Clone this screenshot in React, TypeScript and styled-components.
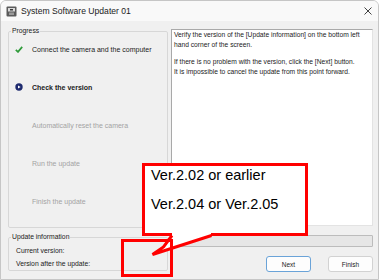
import React from "react";
import styled, { createGlobalStyle } from "styled-components";

const GlobalStyle = createGlobalStyle`
  html, body {
    margin: 0;
    padding: 0;
    background: #ffffff;
  }
  * {
    box-sizing: border-box;
  }
`;

const Window = styled.div`
  position: relative;
  width: 379px;
  height: 280px;
  border: 1px solid #c6c6c6;
  border-radius: 6px 6px 0 0;
  background: #f0f0f0;
  display: flex;
  flex-direction: column;
  overflow: hidden;
  font-family: "Liberation Sans", Arial, sans-serif;
  color: #000;
`;

const TitleBar = styled.div`
  height: 20px;
  flex: none;
  display: flex;
  align-items: center;
  padding: 0 6px 0 5px;
  background: #f9f9f9;
`;

const TitleText = styled.span`
  margin-left: 4px;
  font-size: 8.6px;
  color: #1b1b1b;
  flex: 1;
`;

const Body = styled.div`
  display: grid;
  grid-template-columns: 160px 202px;
  column-gap: 3px;
  padding: 6px 0 0 7px;
`;

const LeftColumn = styled.div`
  display: flex;
  flex-direction: column;
  gap: 5px;
`;

const GroupBox = styled.fieldset<{ $height: number }>`
  margin: 0;
  padding: 0;
  height: ${(p) => p.$height}px;
  border: 1px solid #d7d7d7;
  border-radius: 2px;
`;

const Legend = styled.legend`
  padding: 0 1px;
  margin-left: 2px;
  font-size: 6.8px;
  line-height: 8px;
  color: #1b1b1b;
`;

const StepList = styled.div`
  display: flex;
  flex-direction: column;
  gap: 26px;
  padding: 8px 0 0 6px;
`;

const StepRow = styled.div<{ $state: "done" | "current" | "todo" }>`
  display: flex;
  align-items: center;
  height: 12px;
  font-size: 7px;
  font-weight: ${(p) => (p.$state === "current" ? 700 : 400)};
  color: ${(p) => (p.$state === "todo" ? "#a3a3a3" : "#1b1b1b")};
`;

const StepIcon = styled.span`
  width: 8px;
  height: 8px;
  margin-right: 9px;
  display: flex;
  align-items: center;
  justify-content: center;
`;

const InfoRows = styled.div`
  display: flex;
  flex-direction: column;
  padding: 3px 0 0 7px;
`;

const InfoRow = styled.div`
  font-size: 6.8px;
  line-height: 13px;
  color: #1b1b1b;
`;

const RightColumn = styled.div`
  display: flex;
  flex-direction: column;
  padding-top: 2px;
`;

const MessagePanel = styled.div`
  height: 197px;
  background: #ffffff;
  border: 1px solid #a9a9a9;
  border-right-color: #e3e3e3;
  border-bottom-color: #e3e3e3;
  padding: 0 0 0 2px;
  font-family: "Liberation Sans", Tahoma, sans-serif;
  font-size: 6.7px;
  line-height: 10px;
  color: #1b1b1b;
  white-space: nowrap;
`;

const Paragraph = styled.p`
  margin: 0 0 7px 0;
`;

const ProgressTrack = styled.div`
  margin-top: 9px;
  height: 12px;
  background: #e6e6e6;
  border: 1px solid #bcbcbc;
  border-radius: 1px;
`;

const ButtonRow = styled.div`
  display: flex;
  justify-content: flex-end;
  gap: 17px;
  margin-top: 9px;
`;

const Button = styled.button<{ $default?: boolean }>`
  width: 45px;
  height: 16px;
  padding: 0;
  border-radius: 3px;
  border: 1px solid ${(p) => (p.$default ? "#6aa3d8" : "#d2d2d2")};
  background: #fdfdfd;
  font-family: "Liberation Sans", Arial, sans-serif;
  font-size: 6.5px;
  color: #1b1b1b;
`;

const CalloutBox = styled.div`
  position: absolute;
  left: 141px;
  top: 162px;
  width: 166px;
  height: 73px;
  border: 3px solid #ff0000;
  background: #ffffff;
  padding: 0 0 0 6px;
  display: flex;
  flex-direction: column;
  gap: 11px;
  font-family: "Liberation Sans", Arial, sans-serif;
  font-size: 14.5px;
  line-height: 18px;
  color: #000;
`;

const CalloutTail = styled.svg`
  position: absolute;
  left: 139px;
  top: 225px;
`;

const Marker = styled.div`
  position: absolute;
  left: 120px;
  top: 238px;
  width: 52px;
  height: 38px;
  border: 3px solid #ff0000;
`;

const AppIcon = () => (
  <svg width="11" height="11" viewBox="0 0 11 11">
    <rect x="0.5" y="0.5" width="10" height="10" rx="1" fill="#5b5b5b" />
    <rect x="2" y="2" width="7" height="3.5" fill="#d8d8d8" />
    <rect x="3" y="6.5" width="5" height="2.5" fill="#9a9a9a" />
    <rect x="4" y="3" width="3" height="1.5" fill="#3a3a3a" />
  </svg>
);

const CloseIcon = () => (
  <svg width="8" height="8" viewBox="0 0 8 8">
    <path d="M0.5 0.5 L7.5 7.5 M7.5 0.5 L0.5 7.5" stroke="#2b2b2b" strokeWidth="0.9" />
  </svg>
);

const CheckIcon = () => (
  <svg width="8" height="7" viewBox="0 0 8 7">
    <path d="M0.8 3.8 L3 5.9 L7.2 0.9" stroke="#2f9b3a" strokeWidth="1.7" fill="none" />
  </svg>
);

const CurrentIcon = () => (
  <svg width="8" height="8" viewBox="0 0 8 8">
    <circle cx="4" cy="4" r="3.7" fill="#1e2a6e" />
    <path d="M3 2.4 L5.6 4 L3 5.6 Z" fill="#ffffff" />
  </svg>
);

type Step = { label: string; state: "done" | "current" | "todo" };

const steps: Step[] = [
  { label: "Connect the camera and the computer", state: "done" },
  { label: "Check the version", state: "current" },
  { label: "Automatically reset the camera", state: "todo" },
  { label: "Run the update", state: "todo" },
  { label: "Finish the update", state: "todo" },
];

export default function App() {
  return (
    <>
      <GlobalStyle />
      <Window>
        <TitleBar>
          <AppIcon />
          <TitleText>System Software Updater 01</TitleText>
          <CloseIcon />
        </TitleBar>
        <Body>
          <LeftColumn>
            <GroupBox $height={201}>
              <Legend>Progress</Legend>
              <StepList>
                {steps.map((s) => (
                  <StepRow key={s.label} $state={s.state}>
                    <StepIcon>
                      {s.state === "done" && <CheckIcon />}
                      {s.state === "current" && <CurrentIcon />}
                    </StepIcon>
                    {s.label}
                  </StepRow>
                ))}
              </StepList>
            </GroupBox>
            <GroupBox $height={38}>
              <Legend>Update information</Legend>
              <InfoRows>
                <InfoRow>Current version:</InfoRow>
                <InfoRow>Version after the update:</InfoRow>
              </InfoRows>
            </GroupBox>
          </LeftColumn>
          <RightColumn>
            <MessagePanel>
              <Paragraph>
                Verify the version of the [Update information] on the bottom left
                <br />
                hand corner of the screen.
              </Paragraph>
              <Paragraph>
                If there is no problem with the version, click the [Next] button.
                <br />
                It is impossible to cancel the update from this point forward.
              </Paragraph>
            </MessagePanel>
            <ProgressTrack />
            <ButtonRow>
              <Button $default>Next</Button>
              <Button>Finish</Button>
            </ButtonRow>
          </RightColumn>
        </Body>

        <CalloutBox>
          <span>Ver.2.02 or earlier</span>
          <span>Ver.2.04 or Ver.2.05</span>
        </CalloutBox>
        <CalloutTail width="80" height="34" viewBox="0 0 80 34">
          <path d="M32 6 L32 10 L23.5 21 L12.5 28.5 L71 10 L71 6 Z" fill="#ffffff" />
          <path
            d="M32 9.5 L23.5 21 L12.5 28.5 L71.5 9.5"
            fill="none"
            stroke="#ff0000"
            strokeWidth="3"
            strokeLinejoin="miter"
          />
        </CalloutTail>
        <Marker />
      </Window>
    </>
  );
}
